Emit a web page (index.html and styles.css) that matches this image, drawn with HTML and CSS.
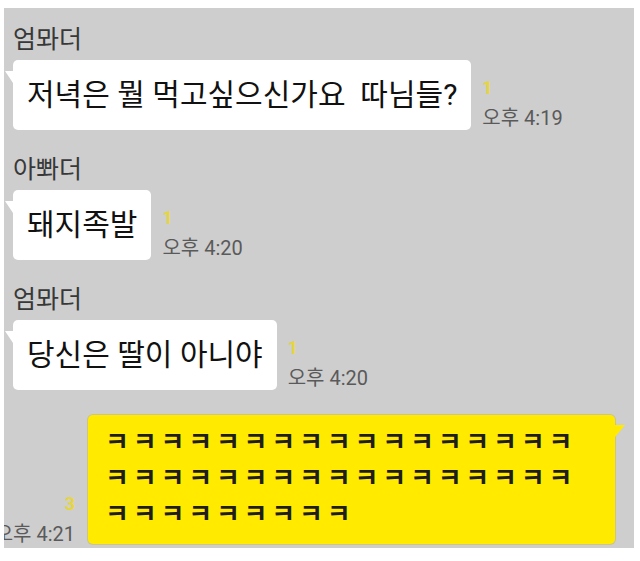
FILE: index.html
```html
<!DOCTYPE html>
<html lang="ko">

<head>
    <meta charset="UTF-8" />
    <meta name="viewport" content="width=device-width, initial-scale=1.0" />
    <title>가족 단톡방</title>
    <link rel="stylesheet" href="styles.css">
</head>

<body>
    <div class="chat">
        <div class="group">
            <div class="name">엄뫄더</div>
            <div class="row">
                <div class="bubble">저녁은 뭘 먹고싶으신가요  따님들?</div>
                <div class="meta">
                    <span class="unread">1</span>
                    <span class="time">오후 4:19</span>
                </div>
            </div>
        </div>

        <div class="group">
            <div class="name">아뽜더</div>
            <div class="row">
                <div class="bubble">돼지족발</div>
                <div class="meta">
                    <span class="unread">1</span>
                    <span class="time">오후 4:20</span>
                </div>
            </div>
        </div>

        <div class="group">
            <div class="name">엄뫄더</div>
            <div class="row">
                <div class="bubble">당신은 딸이 아니야</div>
                <div class="meta">
                    <span class="unread">1</span>
                    <span class="time">오후 4:20</span>
                </div>
            </div>
        </div>

        <div class="row mine">
            <div class="meta">
                <span class="unread">3</span>
                <span class="time">오후 4:21</span>
            </div>
            <div class="bubble yellow">ㅋㅋㅋㅋㅋㅋㅋㅋㅋㅋㅋㅋㅋㅋㅋㅋㅋㅋㅋㅋㅋㅋㅋㅋㅋㅋㅋㅋㅋㅋㅋㅋㅋㅋㅋㅋㅋㅋㅋㅋㅋㅋㅋ</div>
        </div>
    </div>
</body>

</html>
```

FILE: styles.css
```css
:root {
    --chat-bg: #cecece;
    --bubble: #ffffff;
    --mine: #ffea00;
    --name: #383838;
    --time: #5a5a5a;
    --unread: #e6d63c;
}

body {
    font-family: Roboto, 'Noto Sans CJK KR', sans-serif;
    background: #ffffff;
    margin: 0;
    padding: 0;
}

.chat {
    background: var(--chat-bg);
    width: 630px;
    height: 540px;
    margin: 8px 0 0 4px;
    padding-top: 17px;
    box-sizing: border-box;
    overflow: hidden;
}

.group {
    padding-left: 9px;
}

.name {
    font-size: 25px;
    line-height: 30px;
    color: var(--name);
    margin-bottom: 5px;
}

.row {
    display: flex;
    align-items: flex-end;
    gap: 11px;
    margin-bottom: 25px;
}

.bubble {
    position: relative;
    background: var(--bubble);
    color: #111;
    font-size: 30px;
    line-height: 40px;
    padding: 15px 14px;
    border-radius: 5px;
    white-space: pre-wrap;
    flex-shrink: 0;
}

/* little tail on the top left */
.bubble::before {
    content: "";
    position: absolute;
    left: -8px;
    top: 11px;
    border-top: 12px solid var(--bubble);
    border-left: 8px solid transparent;
}

.meta {
    display: flex;
    flex-direction: column;
    align-items: flex-start;
    flex-shrink: 0;
    white-space: nowrap;
}

.unread {
    font-size: 18px;
    line-height: 18px;
    font-weight: bold;
    color: var(--unread);
    margin-bottom: 10px;
}

.time {
    font-size: 20px;
    line-height: 23px;
    color: var(--time);
}

/* my message */
.row.mine {
    justify-content: flex-end;
    gap: 13px;
    padding-right: 19px;
    margin-bottom: 0;
}

.mine .meta {
    align-items: flex-end;
    margin-bottom: -2px;
}

.bubble.yellow {
    background: var(--mine);
    color: #1e1e1e;
    width: 527px;
    box-sizing: border-box;
    padding: 9px 28px 12px 17px;
    font-size: 26px;
    font-weight: bold;
    line-height: 36px;
    letter-spacing: 3.8px;
    word-break: break-all;
    white-space: normal;
    box-shadow: 0 0 0 1px rgba(200, 180, 0, 0.35);
}

.bubble.yellow::before {
    left: auto;
    right: -10px;
    top: 10px;
    border-top: 12px solid var(--mine);
    border-left: 0;
    border-right: 10px solid transparent;
}
```
